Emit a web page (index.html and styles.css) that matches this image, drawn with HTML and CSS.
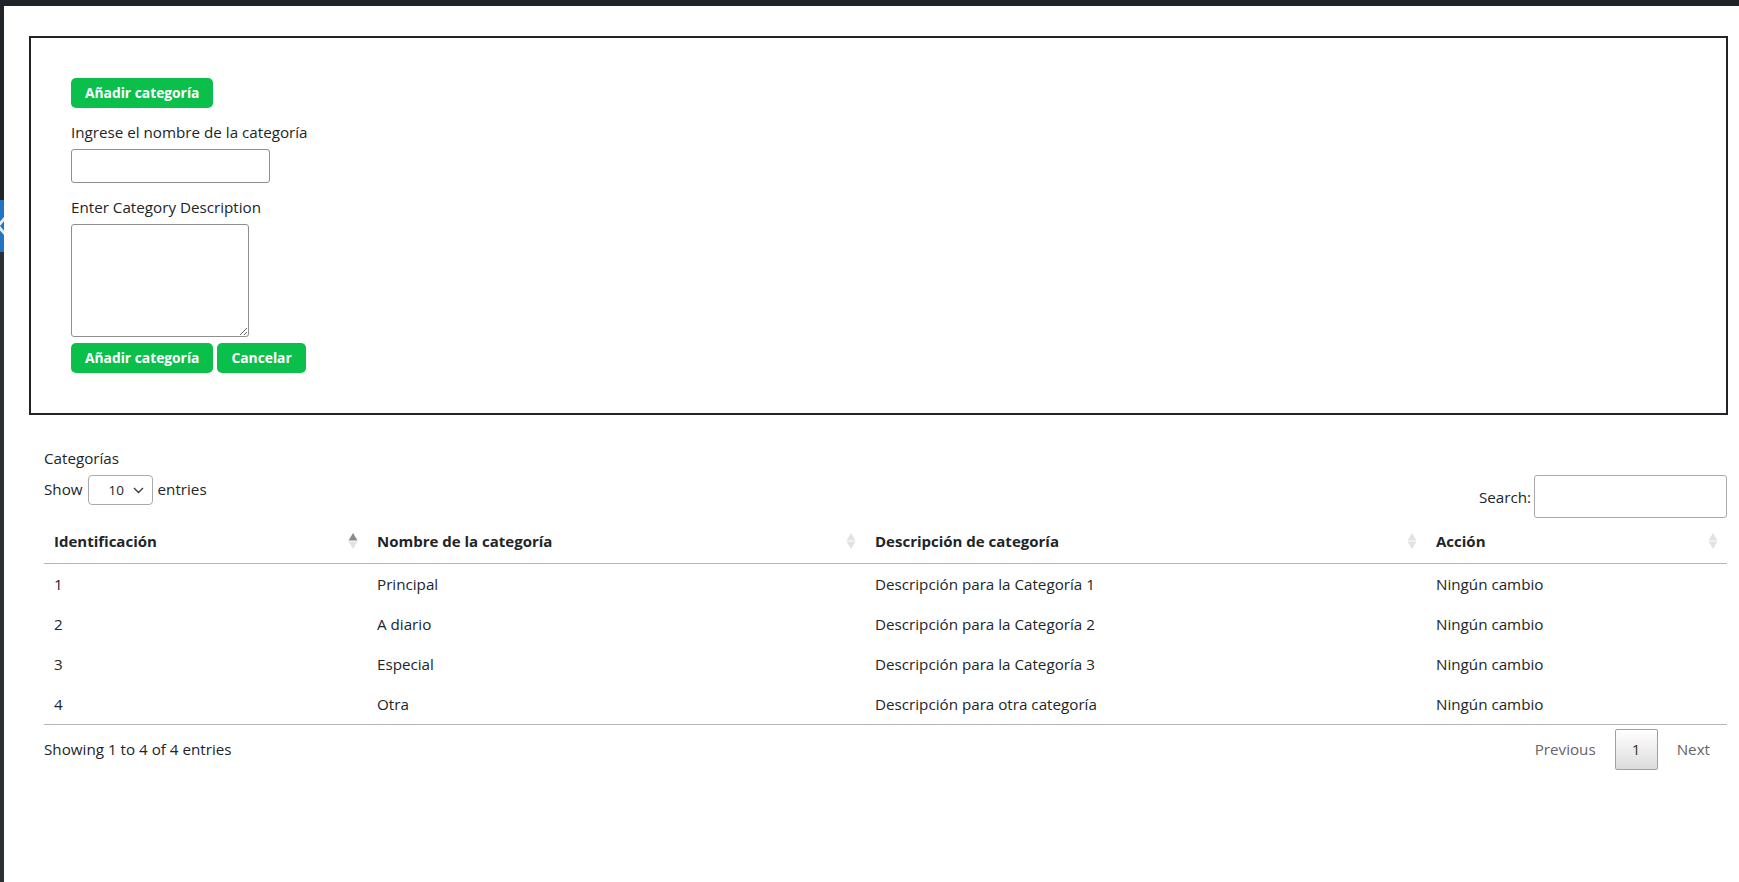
FILE: index.html
```html
<!DOCTYPE html>
<html lang="es">
<head>
<meta charset="utf-8">
<title>Categorías</title>
<link rel="stylesheet" href="styles.css">
</head>
<body>
<div class="topbar"></div>
<div class="shell">
  <aside class="rail">
    <div class="rail-top"></div>
    <div class="rail-tab">
      <svg class="rail-chev" width="4" height="52" viewBox="0 0 4 52"><polygon points="-4,26 4,17 6,19 0,26 6,33 4,35" fill="#e9eef5"/></svg>
    </div>
    <div class="rail-bottom"></div>
  </aside>
  <main class="main">
    <section class="form-box">
      <button class="btn" type="button">Añadir categoría</button>
      <form class="cat-form">
        <label class="field-label" for="cat-name">Ingrese el nombre de la categoría</label>
        <input id="cat-name" class="text-input" type="text">
        <label class="field-label" for="cat-desc">Enter Category Description</label>
        <textarea id="cat-desc" class="text-area"></textarea>
        <div class="form-actions">
          <button class="btn" type="button">Añadir categoría</button>
          <button class="btn" type="button">Cancelar</button>
        </div>
      </form>
    </section>

    <section class="list">
      <div class="list-title">Categorías</div>
      <div class="dt-top">
        <div class="dt-length">
          <span>Show</span>
          <span class="select-wrap">
            <select class="len-select"><option>10</option><option>25</option><option>50</option><option>100</option></select>
            <svg class="select-chev" width="11" height="7" viewBox="0 0 11 7"><polyline points="1,1 5.5,5.5 10,1" fill="none" stroke="#3c3c3c" stroke-width="1.4"/></svg>
          </span>
          <span>entries</span>
        </div>
        <div class="dt-filter">
          <label for="dt-search">Search:</label>
          <input id="dt-search" class="search-input" type="search">
        </div>
      </div>

      <table class="dt-table">
        <colgroup>
          <col class="col-id">
          <col class="col-name">
          <col class="col-desc">
          <col class="col-act">
        </colgroup>
        <thead>
          <tr>
            <th><div class="th-in"><span>Identificación</span><svg class="sort" width="10" height="18" viewBox="0 0 10 18"><polygon points="5,1 9.5,8.5 0.5,8.5" class="up on"/><polygon points="0.5,9.5 9.5,9.5 5,17" class="down"/></svg></div></th>
            <th><div class="th-in"><span>Nombre de la categoría</span><svg class="sort" width="10" height="18" viewBox="0 0 10 18"><polygon points="5,1 9.5,8.5 0.5,8.5" class="up"/><polygon points="0.5,9.5 9.5,9.5 5,17" class="down"/></svg></div></th>
            <th><div class="th-in"><span>Descripción de categoría</span><svg class="sort" width="10" height="18" viewBox="0 0 10 18"><polygon points="5,1 9.5,8.5 0.5,8.5" class="up"/><polygon points="0.5,9.5 9.5,9.5 5,17" class="down"/></svg></div></th>
            <th><div class="th-in"><span>Acción</span><svg class="sort" width="10" height="18" viewBox="0 0 10 18"><polygon points="5,1 9.5,8.5 0.5,8.5" class="up"/><polygon points="0.5,9.5 9.5,9.5 5,17" class="down"/></svg></div></th>
          </tr>
        </thead>
        <tbody>
          <tr><td>1</td><td>Principal</td><td>Descripción para la Categoría 1</td><td>Ningún cambio</td></tr>
          <tr><td>2</td><td>A diario</td><td>Descripción para la Categoría 2</td><td>Ningún cambio</td></tr>
          <tr><td>3</td><td>Especial</td><td>Descripción para la Categoría 3</td><td>Ningún cambio</td></tr>
          <tr><td>4</td><td>Otra</td><td>Descripción para otra categoría</td><td>Ningún cambio</td></tr>
        </tbody>
      </table>

      <div class="dt-bottom">
        <div class="dt-info">Showing 1 to 4 of 4 entries</div>
        <div class="dt-paginate">
          <span class="pg-btn disabled">Previous</span>
          <span class="pg-btn current">1</span>
          <span class="pg-btn disabled">Next</span>
        </div>
      </div>
    </section>
  </main>
</div>
</body>
</html>
```

FILE: styles.css
```css
* { box-sizing: border-box; }

html, body {
  margin: 0;
  padding: 0;
  background: #ffffff;
}

body {
  font-family: "Open Sans", "Noto Sans", "Liberation Sans", sans-serif;
  font-size: 15.2px;
  line-height: 24px;
  color: #212529;
}

.topbar {
  height: 6px;
  background: #202428;
}

.shell {
  display: flex;
  min-height: calc(100vh - 6px);
}

.rail {
  width: 4px;
  flex: 0 0 4px;
  display: flex;
  flex-direction: column;
}

.rail-top {
  height: 194px;
  background: #202428;
}

.rail-tab {
  height: 52px;
  background: #2474c4;
  overflow: hidden;
}

.rail-chev { display: block; }

.rail-bottom {
  flex: 1;
  background: #2b3035;
}

.main {
  flex: 1;
  padding: 30px 11px 40px 25px;
}

/* ---------- form box ---------- */
.form-box {
  border: 2px solid #202428;
  padding: 40px 40px 40px 40px;
}

.btn {
  display: inline-block;
  height: 30px;
  padding: 0 14px;
  border: none;
  border-radius: 5px;
  background: #0bbf4b;
  color: #ffffff;
  font-family: "Open Sans", "Noto Sans", "Liberation Sans", sans-serif;
  font-size: 13.8px;
  font-weight: 700;
  line-height: 30px;
  cursor: pointer;
}

.cat-form {
  display: flex;
  flex-direction: column;
  align-items: flex-start;
  margin: 0;
}

.field-label {
  display: block;
  margin-top: 12px;
  margin-bottom: 5px;
  line-height: 24px;
}

.text-input {
  width: 199px;
  height: 34px;
  border: 1px solid #8f8f8f;
  border-radius: 3px;
  padding: 2px 6px;
  font: inherit;
}

.text-area {
  display: block;
  width: 178px;
  height: 113px;
  border: 1px solid #8f8f8f;
  border-radius: 3px;
  padding: 2px 4px;
  font: inherit;
}

.form-actions {
  display: flex;
  gap: 4px;
  margin-top: 6px;
}

/* ---------- list / datatable ---------- */
.list {
  margin: 31px 1px 0 15px;
}

.list-title {
  line-height: 24px;
  margin-bottom: 5px;
}

.dt-top {
  display: flex;
  justify-content: space-between;
  align-items: flex-start;
}

.dt-length {
  display: flex;
  align-items: center;
  gap: 5px;
  height: 30px;
}

.dt-length > span:first-child,
.dt-length > span:last-child {
  position: relative;
  top: -1px;
}

.select-wrap {
  position: relative;
  display: inline-block;
  width: 65px;
  height: 30px;
}

.len-select {
  appearance: none;
  -webkit-appearance: none;
  width: 65px;
  height: 30px;
  border: 1px solid #aaaaaa;
  border-radius: 4px;
  background: #ffffff;
  padding: 0 0 0 20px;
  font-family: inherit;
  font-size: 13.5px;
  color: #212529;
}

.select-chev {
  position: absolute;
  right: 9px;
  top: 12px;
  pointer-events: none;
}

.dt-filter {
  display: flex;
  align-items: center;
  gap: 3px;
}

.dt-filter label {
  padding-top: 1px;
}

.search-input {
  width: 193px;
  height: 43px;
  border: 1px solid #aaaaaa;
  border-radius: 3px;
  padding: 5px;
  font: inherit;
}

.dt-table {
  width: 100%;
  margin-top: 1px;
  border-collapse: collapse;
  border-spacing: 0;
  table-layout: fixed;
}

.col-id { width: 323px; }
.col-name { width: 498px; }
.col-desc { width: 561px; }

.dt-table th {
  padding: 10px 9px 10px 10px;
  text-align: left;
  font-size: 15px;
  font-weight: 700;
  line-height: 24px;
  border-bottom: 1px solid #b4b4b4;
}

.th-in {
  display: flex;
  justify-content: space-between;
  align-items: center;
}

.sort { display: block; }
.sort .up, .sort .down { fill: #e2e2e2; }
.sort .up.on { fill: #8a8a8a; }

.dt-table td {
  padding: 8px 10px;
  line-height: 24px;
}

.dt-table tbody tr:last-child td {
  border-bottom: 1px solid #b4b4b4;
}

.dt-bottom {
  display: flex;
  justify-content: space-between;
  align-items: flex-start;
}

.dt-info {
  padding-top: 12px;
}

.dt-paginate {
  display: flex;
  padding-top: 4px;
}

.pg-btn {
  display: inline-block;
  margin-left: 2px;
  padding: 7px 16px;
  line-height: 25px;
  border: 1px solid transparent;
  border-radius: 2px;
  color: #666666;
}

.pg-btn.current {
  color: #333333;
  border-color: #a0a0a0;
  background: linear-gradient(to bottom, #ffffff 0%, #dcdcdc 100%);
  min-width: 43px;
  text-align: center;
}
```
